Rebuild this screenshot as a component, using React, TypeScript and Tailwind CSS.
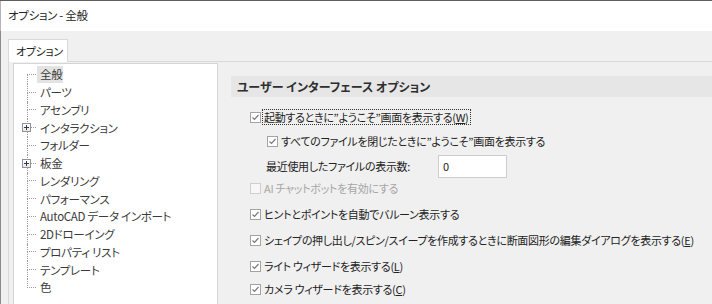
import React from "react";

const treeItems: { label: string; plus?: boolean; selected?: boolean }[] = [
  { label: "全般", selected: true },
  { label: "パーツ" },
  { label: "アセンブリ" },
  { label: "インタラクション", plus: true },
  { label: "フォルダー" },
  { label: "板金", plus: true },
  { label: "レンダリング" },
  { label: "パフォーマンス" },
  { label: "AutoCAD データ インポート" },
  { label: "2Dドローイング" },
  { label: "プロパティ リスト" },
  { label: "テンプレート" },
  { label: "色" },
];

function Check({ disabled }: { disabled?: boolean }) {
  return (
    <div
      className={
        "w-[11px] h-[11px] shrink-0 border flex items-center justify-center " +
        (disabled ? "border-[#cfcfcf] bg-[#f7f7f7]" : "border-[#a3a3a3] bg-white")
      }
    >
      {!disabled && (
        <svg width="9" height="9" viewBox="0 0 9 9">
          <polyline points="1.5,4.5 3.5,6.5 7.5,2" fill="none" stroke="#7a7a7a" strokeWidth="1.2" />
        </svg>
      )}
    </div>
  );
}

function Row({
  children,
  disabled,
  focus,
  indent,
  className,
}: {
  children: React.ReactNode;
  disabled?: boolean;
  focus?: boolean;
  indent: string;
  className: string;
}) {
  return (
    <div className={"flex items-center h-[18px] " + indent + " " + className}>
      <Check disabled={disabled} />
      <span
        className={
          "ml-[1px] px-[1px] leading-[14px] whitespace-nowrap " +
          (focus ? "border border-dotted border-[#333]" : "border border-transparent") +
          (disabled ? " text-[#a6a6a6]" : "")
        }
      >
        {children}
      </span>
    </div>
  );
}

const Q = () => <span className="[font-feature-settings:normal]">”</span>;

export default function App() {
  return (
    <div className="w-[712px] h-[304px] overflow-hidden bg-[#f0f0f0] border-t border-[#5e5e5e] flex flex-col font-['Noto_Sans_CJK_JP',sans-serif] [font-feature-settings:'palt'] text-[11px] tracking-[-0.3px] text-[#222]">
      <div className="h-[30px] shrink-0 bg-white border-l border-[#b4b4b4] flex items-center pl-[7px] text-[11.5px]">
        オプション - 全般
      </div>
      <div className="flex-1 flex flex-col border-l border-[#8a8a8a] pt-[8px] pl-[7px]">
        <div className="flex shrink-0">
          <div className="relative z-10 -mb-px h-[23px] w-[60px] bg-white border border-b-0 border-[#d9d9d9] flex items-center pl-[7px] whitespace-nowrap text-[#222]">
            オプション
          </div>
        </div>
        <div className="flex-1 flex border-t border-l border-[#d9d9d9] pl-[4px] pt-[1px]">
          {/* tree */}
          <div className="w-[205px] h-[260px] shrink-0 bg-white border border-[#d5d5d5] pt-[2px] text-[#3a3a3a]">
            {treeItems.map((it, i) => {
              const first = i === 0;
              const last = i === treeItems.length - 1;
              return (
                <div key={it.label} className="h-[17.75px] flex items-stretch">
                  <div className="w-[13px] shrink-0" />
                  <div className="relative w-[9px] shrink-0 flex flex-col">
                    <div
                      className={
                        "h-1/2 border-b border-dotted border-[#9a9a9a] " +
                        (first ? "" : "border-l")
                      }
                    />
                    <div className={"h-1/2 border-dotted border-[#9a9a9a] " + (last ? "" : "border-l")} />
                    {it.plus && (
                      <div className="absolute left-[-5px] top-[4px] w-[9px] h-[9px] border border-[#939393] bg-gradient-to-b from-white to-[#e8e8e8] flex items-center justify-center">
                        <svg width="7" height="7" viewBox="0 0 7 7">
                          <path d="M1 3.5h5M3.5 1v5" stroke="#2a3a5a" strokeWidth="1" />
                        </svg>
                      </div>
                    )}
                  </div>
                  <div className="flex items-center">
                    <span
                      className={
                        "ml-[1px] pl-[3px] pr-[1px] h-[17px] flex items-center whitespace-pre text-[11.5px] " +
                        (it.selected ? "bg-[#e3e3e3]" : "")
                      }
                    >
                      {it.label}
                    </span>
                  </div>
                </div>
              );
            })}
          </div>
          {/* right panel */}
          <div className="flex-1 ml-[13px] mt-[13px] flex flex-col">
            <div className="h-[21px] bg-[#e6e6e6] flex items-center pl-[6px] text-[12px] tracking-normal font-bold text-[#2e2e2e]">
              ユーザー インターフェース オプション
            </div>
            <Row indent="ml-[19px]" className="mt-[11px]" focus>
              起動するときに<Q />ようこそ<Q />画面を表示する(<u>W</u>)
            </Row>
            <Row indent="ml-[36px]" className="mt-[6px]">
              すべてのファイルを閉じたときに”ようこそ”画面を表示する
            </Row>
            <div className="mt-[5px] h-[23px] flex items-center ml-[35px]">
              <span className="w-[172px] whitespace-nowrap">最近使用したファイルの表示数:</span>
              <div className="w-[69px] h-[23px] bg-white border border-[#cdcdcd] flex items-center pl-[4px]">0</div>
            </div>
            <Row indent="ml-[19px]" className="mt-[1px]" disabled>
              AI チャットボットを有効にする
            </Row>
            <Row indent="ml-[19px]" className="mt-[8px]">
              ヒントとポイントを自動でバルーン表示する
            </Row>
            <Row indent="ml-[19px]" className="mt-[8px]">
              シェイプの押し出し/スピン/スイープを作成するときに断面図形の編集ダイアログを表示する(<u>E</u>)
            </Row>
            <Row indent="ml-[19px]" className="mt-[8px]">
              ライト ウィザードを表示する(<u>L</u>)
            </Row>
            <Row indent="ml-[19px]" className="mt-[5px]">
              カメラ ウィザードを表示する(<u>C</u>)
            </Row>
          </div>
        </div>
      </div>
    </div>
  );
}
